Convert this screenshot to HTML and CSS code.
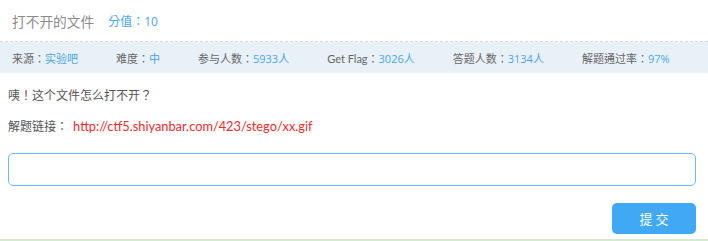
FILE: index.html
```html
<!DOCTYPE html>
<html>
<head>
  <meta charset="UTF-8">
  <title>打不开的文件</title>
  <link rel="stylesheet" href="styles.css">
</head>
<body>
  <div class="task-header">
    <h1>打不开的文件</h1>
    <span class="score">分值：10</span>
  </div>

  <div class="info-bar">
    <span class="info-item">来源：<em>实验吧</em></span>
    <span class="info-item">难度：<em>中</em></span>
    <span class="info-item">参与人数：<em>5933人</em></span>
    <span class="info-item">Get Flag：<em>3026人</em></span>
    <span class="info-item">答题人数：<em>3134人</em></span>
    <span class="info-item">解题通过率：<em>97%</em></span>
  </div>

  <div class="task-body">
    <p class="desc">咦！这个文件怎么打不开？</p>
    <p class="link-line">解题链接： <a href="#">http://ctf5.shiyanbar.com/423/stego/xx.gif</a></p>
    <input type="text" class="answer-input">
    <div class="actions">
      <button class="submit-btn">提 交</button>
    </div>
  </div>
  <div class="footer-line"></div>
</body>
</html>
```

FILE: styles.css
```css
body {
  margin: 0;
  width: 708px;
  font-family: "Lato", "Noto Sans CJK TC", sans-serif;
  background-color: #ffffff;
  color: #555555;
}
.task-header {
  display: flex;
  align-items: center;
  height: 42px;
  padding: 0 12px;
  border-bottom: 1px dashed #d3d8dd;
  box-sizing: border-box;
}
h1 {
  margin: 0;
  font-size: 13.7px;
  font-weight: normal;
  color: #8c8c8c;
}
.score {
  margin-left: 14px;
  font-size: 12px;
  color: #4aa6ef;
}
.score,
.info-item em {
  font-family: "Open Sans", "Noto Sans CJK TC", sans-serif;
}
.info-bar {
  display: flex;
  align-items: center;
  height: 31px;
  padding: 0 12px;
  background-color: #e9f1f8;
  font-size: 11px;
  color: #666666;
}
.info-item {
  margin-right: 38px;
  white-space: nowrap;
}
.info-item em {
  font-style: normal;
  color: #4aa6ef;
}
.task-body {
  padding: 0 12px 0 8px;
}
.desc {
  margin: 13px 0 0;
  font-size: 12px;
  line-height: 20px;
}
.link-line {
  margin: 10px 0 0;
  font-size: 12px;
  line-height: 20px;
}
.link-line a {
  margin-left: 2px;
  font-size: 12.8px;
  color: #f22a2a;
  text-decoration: none;
}
.answer-input {
  display: block;
  width: 688px;
  height: 33px;
  margin-top: 16px;
  border: 1px solid #6bbcf5;
  border-radius: 5px;
  box-sizing: border-box;
  outline: none;
}
.actions {
  display: flex;
  justify-content: flex-end;
  margin-top: 17px;
  width: 688px;
}
.submit-btn {
  width: 84px;
  height: 31px;
  border: none;
  border-radius: 5px;
  background-color: #3fa9f5;
  color: #ffffff;
  font-family: "Noto Sans CJK TC", sans-serif;
  font-size: 13px;
  cursor: pointer;
}
.footer-line {
  margin-top: 5px;
  height: 3px;
  background-color: #d4ebd0;
}
```
